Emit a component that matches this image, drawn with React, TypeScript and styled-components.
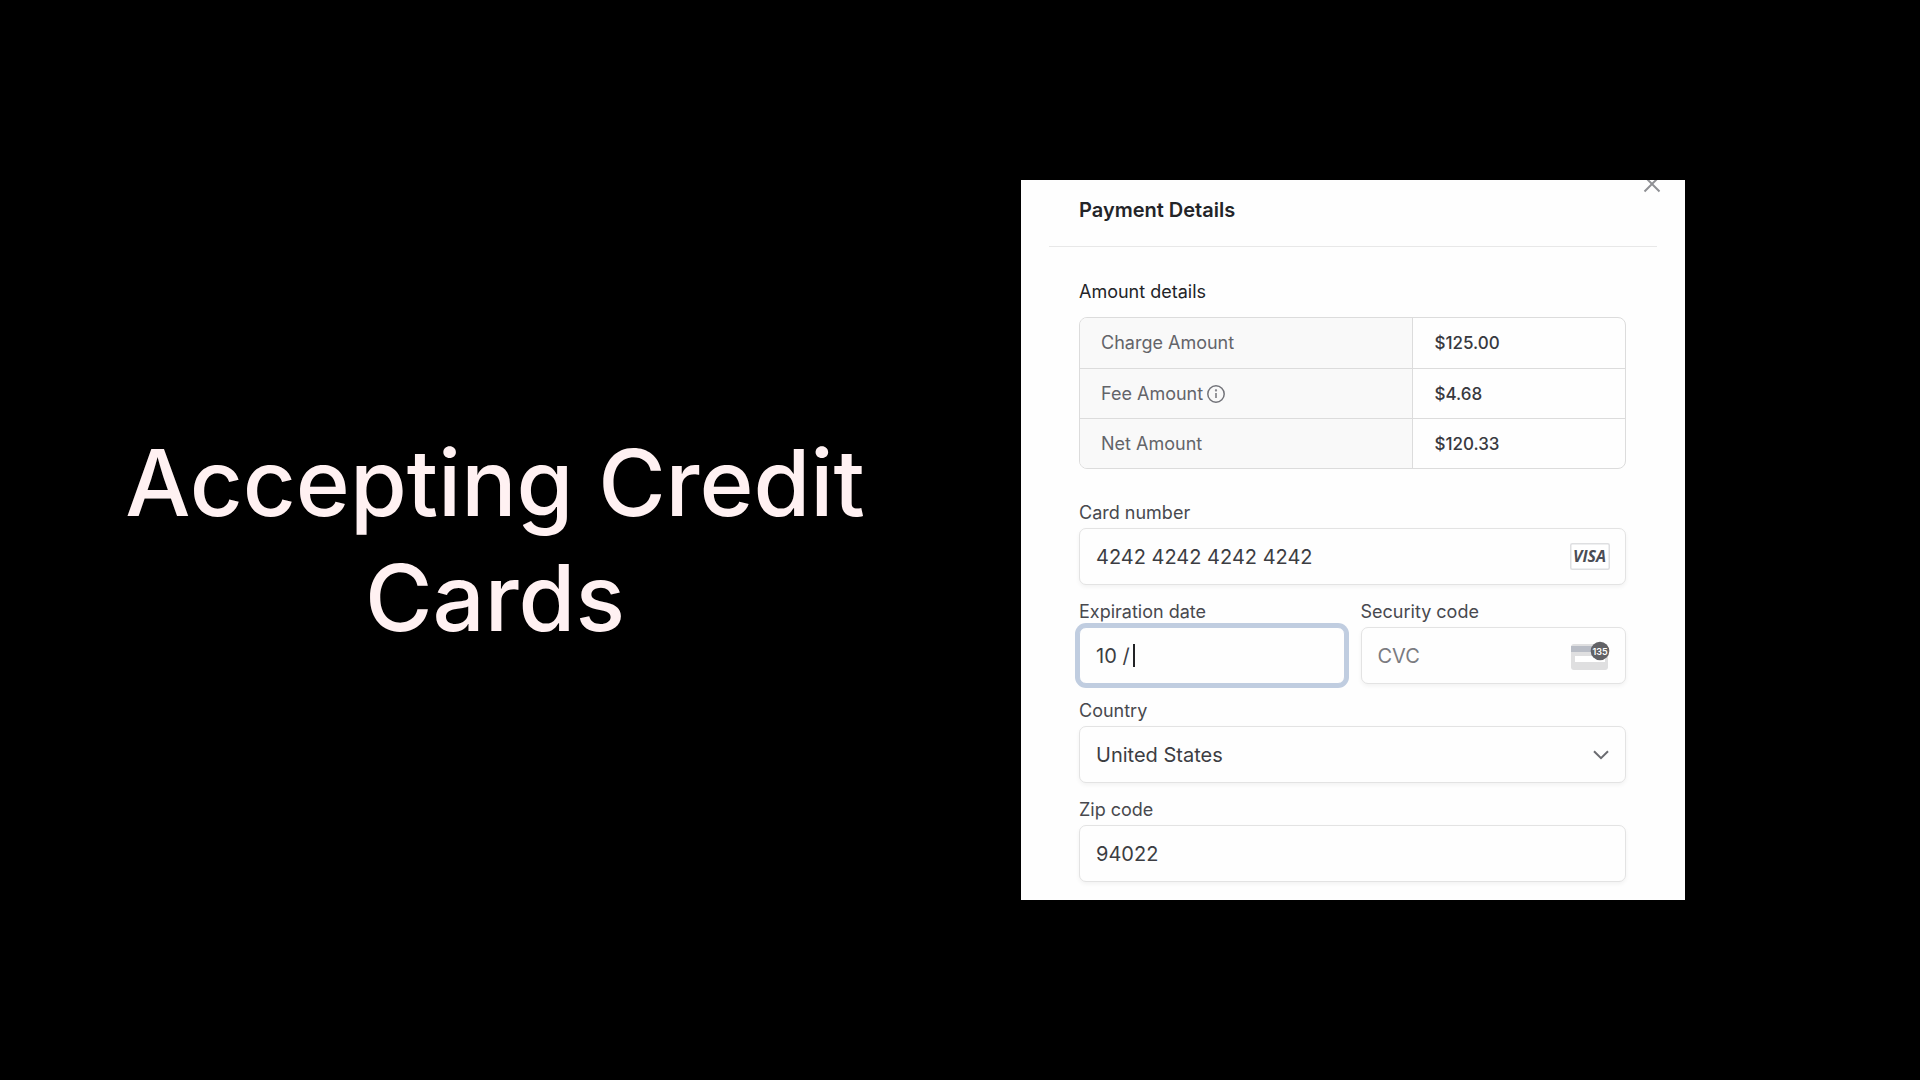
import React from "react";
import styled, { createGlobalStyle, css } from "styled-components";

const GlobalStyle = createGlobalStyle`
  *, *::before, *::after { box-sizing: border-box; }
  body {
    margin: 0;
    background: #000;
    font-family: Inter, "Liberation Sans", sans-serif;
  }
  input, select, button { font: inherit; color: inherit; }
`;

const Slide = styled.main`
  display: grid;
  grid-template-columns: 33fr 31fr;
  align-items: center;
  min-height: 100vh;
  background: #000;
`;

const Title = styled.h1`
  margin: 0;
  padding: 0 96px;
  color: #fff1f2;
  font-size: 92px;
  font-weight: 500;
  line-height: 115px;
  text-align: center;
`;

const Card = styled.section`
  position: relative;
  width: calc(100% - 62px);
  max-width: 664px;
  margin-left: 31px;
  padding-bottom: 18px;
  overflow: hidden;
  background: #fefefe;
  color: #3c3d42;
`;

const CloseButton = styled.button`
  position: absolute;
  top: -8px;
  right: 21px;
  display: flex;
  padding: 0;
  border: 0;
  background: none;
  color: #8f9094;
`;

const CardHeader = styled.header`
  margin: 0 28px;
  padding: 17px 30px 22px;
  border-bottom: 1px solid #e8e8e8;
`;

const Heading = styled.h2`
  margin: 0;
  color: #232428;
  font-size: 20px;
  font-weight: 600;
  line-height: 27px;
`;

const Body = styled.form`
  padding: 33px 59px 0 58px;
`;

const SubHeading = styled.h3`
  margin: 0 0 13px;
  color: #232428;
  font-size: 18px;
  font-weight: 400;
  line-height: 24px;
`;

const AmountTable = styled.table`
  width: 100%;
  margin-bottom: 32px;
  border: 1px solid #dcdcdc;
  border-radius: 8px;
  border-spacing: 0;
  overflow: hidden;
  line-height: 24px;

  tr + tr > * { border-top: 1px solid #dcdcdc; }
`;

const AmountLabel = styled.th`
  width: 61%;
  height: 50px;
  padding: 0 21px;
  background: #f9f9f9;
  color: #636469;
  font-size: 18px;
  font-weight: 400;
  text-align: left;

  svg { margin-left: 4px; vertical-align: -3px; }
`;

const AmountValue = styled.td`
  padding: 0 21px;
  border-left: 1px solid #dcdcdc;
  color: #38393e;
  font-size: 17px;
  font-weight: 500;
`;

const Fields = styled.div`
  display: grid;
  grid-template-columns: repeat(2, minmax(0, 1fr));
  gap: 15px 16px;
`;

const Field = styled.div<{ $wide?: boolean }>`
  display: flex;
  flex-direction: column;
  gap: 3px;
  ${(p) => p.$wide && css`grid-column: 1 / -1;`}
`;

const Label = styled.label`
  color: #48494e;
  font-size: 18px;
  line-height: 24px;
`;

const Box = styled.div<{ $focused?: boolean }>`
  position: relative;
  display: flex;
  align-items: center;
  height: 57px;
  padding: 0 15px 0 16px;
  border: 1px solid #e3e3e3;
  border-radius: 7px;
  background: #fefefe;
  box-shadow: 0 2px 4px rgba(0, 0, 0, 0.05);
  font-size: 20px;
  line-height: 28px;
  ${(p) =>
    p.$focused &&
    css`
      border-color: #c0cde0;
      box-shadow: 0 0 0 4px #c0cde0;
    `}
`;

const TextInput = styled.input<{ $fit?: boolean }>`
  flex: ${(p) => (p.$fit ? "0 0 auto" : "1 1 0")};
  ${(p) => p.$fit && css`field-sizing: content;`}
  min-width: 0;
  padding: 0;
  border: 0;
  outline: 0;
  background: none;
  &::placeholder { color: #7a7b80; opacity: 1; }
`;

const Caret = styled.span`
  width: 2px;
  height: 23px;
  margin-left: 3px;
  background: #222326;
`;

const CountrySelect = styled.select`
  flex: 1;
  height: 100%;
  padding: 0;
  border: 0;
  outline: 0;
  appearance: none;
  background: none;
`;

const Chevron = styled.svg`
  position: absolute;
  right: 16px;
  pointer-events: none;
`;

const CloseIcon = () => (
  <svg width="24" height="24" viewBox="0 0 24 24" fill="none" stroke="currentColor" strokeWidth="2">
    <path d="M4.5 4.5 19.5 19.5M19.5 4.5 4.5 19.5" />
  </svg>
);

const InfoIcon = () => (
  <svg width="18" height="18" viewBox="0 0 18 18" fill="none" stroke="#73747a" strokeWidth="1.5">
    <circle cx="9" cy="9" r="8.2" />
    <path d="M9 8v5" />
    <circle cx="9" cy="5.4" r="0.4" />
  </svg>
);

const VisaIcon = () => (
  <svg width="40" height="27" viewBox="0 0 40 27" role="img" aria-label="Visa">
    <rect x="0.75" y="0.75" width="38.5" height="25.5" rx="1.5" fill="#fff" stroke="#dedfe1" strokeWidth="1.5" />
    <text x="19.5" y="19" textAnchor="middle" fontFamily="Open Sans" fontSize="16" fontWeight="700" fontStyle="italic" fill="#4a4d55">
      VISA
    </text>
  </svg>
);

const CvcIcon = () => (
  <svg width="39" height="30" viewBox="0 0 39 30" role="img" aria-label="Three digit code">
    <rect x="0" y="3" width="37" height="26" rx="3" fill="#dfdfe0" />
    <rect x="0" y="5" width="37" height="6" fill="#b9bdc6" />
    <rect x="4" y="15" width="30" height="6" fill="#fff" />
    <circle cx="29" cy="10" r="9.3" fill="#626266" />
    <text x="29" y="13.6" textAnchor="middle" fontFamily="Inter" fontSize="9" fontWeight="600" fill="#fff">
      135
    </text>
  </svg>
);

const amounts = [
  { label: "Charge Amount", value: "$125.00" },
  { label: "Fee Amount", value: "$4.68", info: true },
  { label: "Net Amount", value: "$120.33" },
];

export default function App() {
  return (
    <>
      <GlobalStyle />
      <Slide>
        <Title>Accepting Credit Cards</Title>
        <Card>
          <CloseButton type="button" aria-label="Close">
            <CloseIcon />
          </CloseButton>
          <CardHeader>
            <Heading>Payment Details</Heading>
          </CardHeader>
          <Body>
            <SubHeading>Amount details</SubHeading>
            <AmountTable>
              <tbody>
                {amounts.map((row) => (
                  <tr key={row.label}>
                    <AmountLabel scope="row">
                      {row.label}
                      {row.info && <InfoIcon />}
                    </AmountLabel>
                    <AmountValue>{row.value}</AmountValue>
                  </tr>
                ))}
              </tbody>
            </AmountTable>
            <Fields>
              <Field $wide>
                <Label htmlFor="card">Card number</Label>
                <Box>
                  <TextInput id="card" defaultValue="4242 4242 4242 4242" />
                  <VisaIcon />
                </Box>
              </Field>
              <Field>
                <Label htmlFor="expiry">Expiration date</Label>
                <Box $focused>
                  <TextInput id="expiry" $fit defaultValue="10 /" />
                  <Caret />
                </Box>
              </Field>
              <Field>
                <Label htmlFor="cvc">Security code</Label>
                <Box>
                  <TextInput id="cvc" placeholder="CVC" />
                  <CvcIcon />
                </Box>
              </Field>
              <Field $wide>
                <Label htmlFor="country">Country</Label>
                <Box>
                  <CountrySelect id="country" defaultValue="US">
                    <option value="US">United States</option>
                  </CountrySelect>
                  <Chevron width="16" height="10" viewBox="0 0 16 10" fill="none" stroke="#6a6b70" strokeWidth="2">
                    <path d="M1 1.2 8 8.2 15 1.2" />
                  </Chevron>
                </Box>
              </Field>
              <Field $wide>
                <Label htmlFor="zip">Zip code</Label>
                <Box>
                  <TextInput id="zip" defaultValue="94022" />
                </Box>
              </Field>
            </Fields>
          </Body>
        </Card>
      </Slide>
    </>
  );
}
